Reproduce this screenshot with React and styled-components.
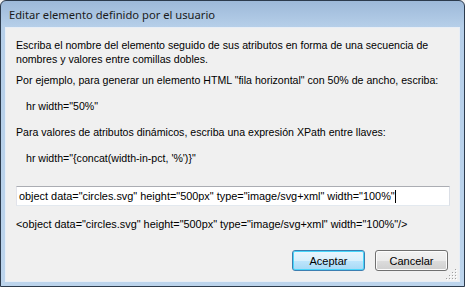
import React from "react";
import styled, { createGlobalStyle } from "styled-components";

const Global = createGlobalStyle`
  html, body { margin: 0; padding: 0; background: #f0f0f0; }
  body { width: 465px; height: 287px; overflow: hidden; }
`;

const Window = styled.div`
  box-sizing: border-box;
  width: 465px;
  height: 287px;
  border: 1px solid #2c3b4d;
  border-radius: 6px 6px 0 0;
  background: linear-gradient(to bottom, #9db9d9 0px, #b6cfe9 26px, #bcd4ec 100%);
  display: flex;
  flex-direction: column;
  padding: 0 4px 4px 4px;
`;

const TitleBar = styled.div`
  height: 26px;
  display: flex;
  align-items: center;
  padding-left: 4px;
  font-family: "Noto Sans", "Open Sans", sans-serif;
  font-size: 11.2px;
  color: #1a1a1a;
`;

const Client = styled.div`
  flex: 1;
  position: relative;
  background: #f0f0f0;
  border: 1px solid #e8eef6;
  padding: 10px 10px 0 10px;
  font-family: "Liberation Sans", Arial, sans-serif;
  font-size: 10.6px;
  color: #000;
  display: flex;
  flex-direction: column;
`;

const Para = styled.p`
  margin: 0 0 ${(p) => p.$gap || 0}px ${(p) => (p.$indent ? 10 : 0)}px;
  line-height: 14px;
  white-space: pre;
`;

const Input = styled.div`
  margin-top: 21px;
  height: 20px;
  box-sizing: border-box;
  border: 1px solid #7a9cbf;
  border-color: #abadb3 #dbdfe6 #e3e9ef #e2e3ea;
  background: #fff;
  display: flex;
  align-items: center;
  padding-left: 2px;
  margin-right: -1px;
  white-space: pre;
  font-size: 10.9px;
`;

const Caret = styled.span`
  display: inline-block;
  width: 1px;
  height: 13px;
  background: #000;
  margin-left: 0;
`;

const Output = styled.div`
  margin-top: 11px;
  white-space: pre;
  line-height: 14px;
  font-size: 10.9px;
`;

const Buttons = styled.div`
  margin-top: auto;
  margin-bottom: 10px;
  display: flex;
  justify-content: flex-end;
  gap: 10px;
  margin-right: 1px;
`;

const Button = styled.button`
  box-sizing: border-box;
  width: 73px;
  height: 21px;
  font-family: "Liberation Sans", Arial, sans-serif;
  font-size: 11px;
  color: #000;
  border-radius: 3px;
  border: 1px solid ${(p) => (p.$default ? "#3c7fb1" : "#707070")};
  background: ${(p) =>
    p.$default
      ? "linear-gradient(to bottom, #eaf6fd 0%, #d9f0fc 50%, #bee6fd 50%, #a7d9f5 100%)"
      : "linear-gradient(to bottom, #f2f2f2 0%, #ebebeb 50%, #dddddd 50%, #cfcfcf 100%)"};
  box-shadow: inset 0 0 0 1px ${(p) => (p.$default ? "#48d6fb" : "#fcfcfc")};
  padding: 0;
`;

const Grip = styled.svg`
  position: absolute;
  right: 1px;
  bottom: 1px;
`;

export default function App() {
  return (
    <>
      <Global />
      <Window>
        <TitleBar>Editar elemento definido por el usuario</TitleBar>
        <Client>
          <Para>Escriba el nombre del elemento seguido de sus atributos en forma de una secuencia de</Para>
          <Para $gap={7}>nombres y valores entre comillas dobles.</Para>
          <Para $gap={12}>Por ejemplo, para generar un elemento HTML "fila horizontal" con 50% de ancho, escriba:</Para>
          <Para $indent $gap={12}>hr width="50%"</Para>
          <Para $gap={12}>Para valores de atributos dinámicos, escriba una expresión XPath entre llaves:</Para>
          <Para $indent>hr width="{"{"}concat(width-in-pct, '%'){"}"}"</Para>
          <Input>
            object data="circles.svg" height="500px" type="image/svg+xml" width="100%"<Caret />
          </Input>
          <Output>&lt;object data="circles.svg" height="500px" type="image/svg+xml" width="100%"/&gt;</Output>
          <Buttons>
            <Button $default>Aceptar</Button>
            <Button>Cancelar</Button>
          </Buttons>
          <Grip width="12" height="12" viewBox="0 0 12 12">
            {[
              [9, 1], [9, 4], [6, 4], [9, 7], [6, 7], [3, 7], [9, 10], [6, 10], [3, 10], [0, 10],
            ].map(([x, y], i) => (
              <g key={i}>
                <rect x={x + 1} y={y + 1} width="1" height="1" fill="#fff" />
                <rect x={x} y={y} width="1" height="1" fill="#a0a0a0" />
              </g>
            ))}
          </Grip>
        </Client>
      </Window>
    </>
  );
}
